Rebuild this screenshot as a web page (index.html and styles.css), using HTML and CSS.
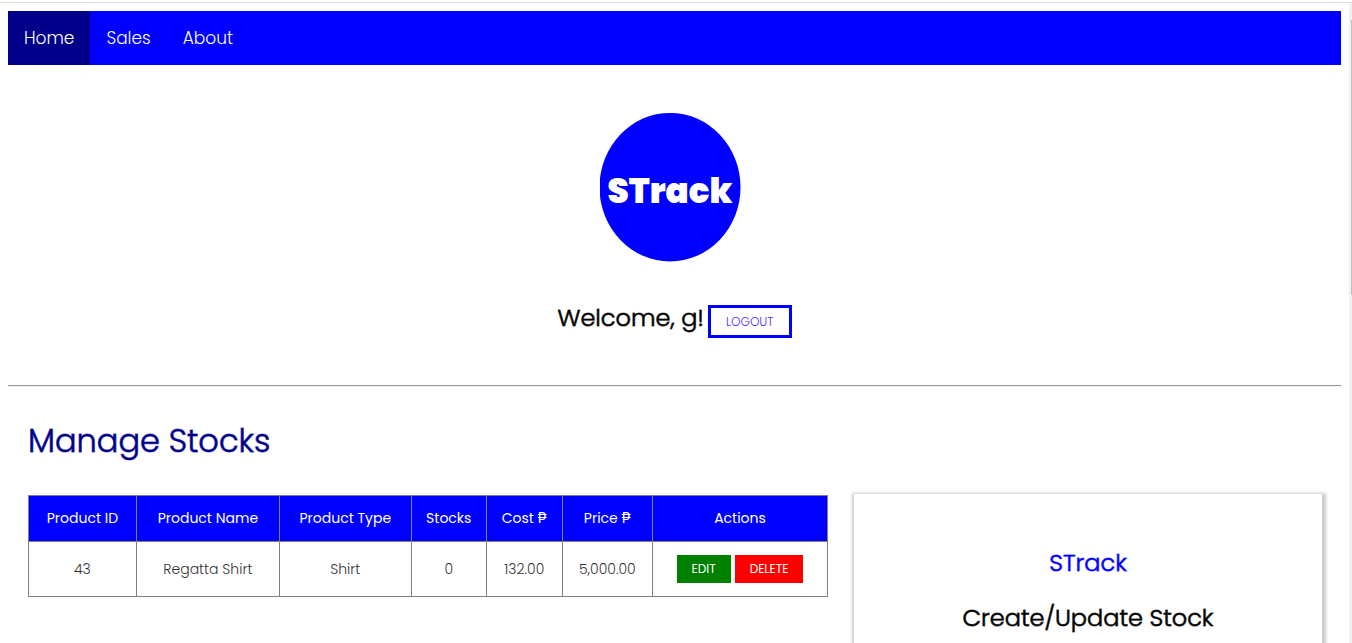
FILE: index.html
```html
<!DOCTYPE html>
<html lang="en">
<head>
<meta charset="utf-8">
<title>STrack</title>
<link rel="stylesheet" href="styles.css">
</head>
<body>
<div class="frame">
  <div class="page">
    <nav class="nav">
      <a class="nav-link active" href="#home">Home</a>
      <a class="nav-link" href="#sales">Sales</a>
      <a class="nav-link" href="#about">About</a>
    </nav>
    <header class="intro">
      <svg class="logo" viewBox="0 0 150 150" role="img" aria-label="STrack">
        <ellipse cx="70" cy="75.2" rx="70.5" ry="74.3" fill="#0000ff"/>
        <text class="logo-text" x="70" y="91" text-anchor="middle">STrack</text>
      </svg>
      <div class="welcome">
        <h2 class="greeting">Welcome, g!</h2>
        <button class="logout" type="button">LOGOUT</button>
      </div>
    </header>
    <hr class="rule">
    <main class="content">
      <h1 class="title">Manage Stocks</h1>
      <div class="columns">
        <table class="stocks">
          <colgroup>
            <col class="c-id"><col class="c-name"><col class="c-type"><col class="c-stocks"><col class="c-cost"><col class="c-price"><col class="c-actions">
          </colgroup>
          <thead>
            <tr><th>Product ID</th><th>Product Name</th><th>Product Type</th><th>Stocks</th><th>Cost ₱</th><th>Price ₱</th><th>Actions</th></tr>
          </thead>
          <tbody>
            <tr><td>43</td><td>Regatta Shirt</td><td>Shirt</td><td>0</td><td>132.00</td><td>5,000.00</td>
              <td><div class="actions"><button class="btn edit" type="button">EDIT</button><button class="btn delete" type="button">DELETE</button></div></td></tr>
          </tbody>
        </table>
        <section class="card">
          <h2 class="brand">STrack</h2>
          <h2 class="card-title">Create/Update Stock</h2>
        </section>
      </div>
    </main>
  </div>
  <div class="track"><div class="thumb"></div></div>
</div>
</body>
</html>
```
FILE: styles.css
```css
* { box-sizing: border-box; }
body {
  margin: 0;
  padding-top: 2px;
  background: #fff;
  color: #000;
  font-family: Poppins, Inter, "Open Sans", sans-serif;
}
h1, h2 {
  margin: 0;
  font-weight: 300;
  -webkit-text-stroke: 1px color-mix(in srgb, currentColor 65%, transparent);
}
button { font-family: inherit; cursor: pointer; }

.frame {
  display: flex;
  min-height: calc(100vh - 2px);
  border-top: 1px solid #e0e0e0;
}
.page {
  flex: 1;
  display: flex;
  flex-direction: column;
  padding: 8px 8px 0;
}
.track { width: 3px; padding: 17px 0 0 2px; background: #f1f1f1; }
.thumb { height: 275px; background: #c1c1c1; }

.nav { display: flex; background: #0000ff; }
.nav-link {
  padding: 14px 16px;
  color: #fff;
  font-size: 17px;
  font-weight: 300;
  line-height: 26px;
  text-decoration: none;
}
.nav-link.active { background: #00008b; }

.intro {
  display: flex;
  flex-direction: column;
  align-items: center;
  padding: 47px 0;
}
.logo { width: 150px; height: 150px; }
.logo-text { fill: #fff; font-size: 34px; font-weight: 900; }
.welcome { display: flex; align-items: flex-start; gap: 4px; margin-top: 43px; }
.greeting { font-size: 24px; line-height: 26px; }
.logout {
  height: 33px;
  padding: 0 15px;
  border: 3px solid #0000ff;
  background: #fff;
  color: #4c33ff;
  font-size: 12px;
  font-weight: 300;
}
.rule {
  width: 100%;
  margin: 0;
  border: 0;
  border-top: 1px solid #9a9a9a;
  border-bottom: 1px solid #eee;
}

.content {
  flex: 1;
  display: flex;
  flex-direction: column;
  padding: 30px 19px 0 20px;
}
.title { color: #00008b; font-size: 32px; line-height: 48px; }
.columns {
  flex: 1;
  display: grid;
  grid-template-columns: 800fr 468fr;
  gap: 26px;
  margin-top: 29px;
}
.stocks {
  width: 100%;
  align-self: start;
  margin-top: 1px;
  table-layout: fixed;
  border-collapse: collapse;
  font-size: 14px;
  line-height: 21px;
  text-align: center;
}
.stocks th, .stocks td { border: 1px solid #808080; padding: 12px 0; }
.stocks th { background: #0000ff; color: #fff; font-weight: 400; }
.stocks td { color: #333; font-weight: 300; height: 55px; }
.c-id { width: 13.5%; }
.c-name { width: 17.9%; }
.c-type { width: 16.5%; }
.c-stocks { width: 9.4%; }
.c-cost { width: 9.5%; }
.c-price { width: 11.3%; }
.c-actions { width: 21.9%; }
.actions { display: flex; justify-content: center; gap: 4px; }
.btn {
  height: 28px;
  padding: 0 15px;
  border: 0;
  color: #fff;
  font-size: 12px;
  font-weight: 400;
}
.edit { background: #008000; }
.delete { background: #ff0000; }

.card {
  padding-top: 51px;
  background: #fff;
  box-shadow: 1px 2px 3px 3px #ccc;
  text-align: center;
}
.brand, .card-title { font-size: 24px; line-height: 36px; }
.brand { color: #0000ff; }
.card-title { margin-top: 19px; }
```
